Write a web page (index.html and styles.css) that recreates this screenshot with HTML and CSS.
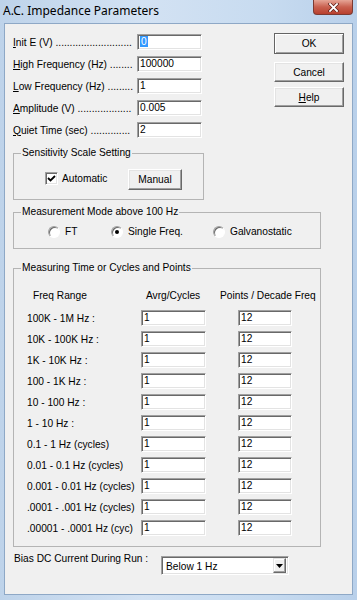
FILE: index.html
```html
<!DOCTYPE html>
<html lang="en">
<head>
    <meta charset="UTF-8">
    <meta name="viewport" content="width=device-width, initial-scale=1.0">
    <title>A.C. Impedance Parameters</title>
    <link rel="stylesheet" href="styles.css">
</head>
<body>
    <div class="window">
        <div class="titlebar">
            <span class="title">A.C. Impedance Parameters</span>
            <span class="close">
                <svg width="11" height="9" viewBox="0 0 11 9">
                    <path d="M2 1 L9 8 M9 1 L2 8" stroke="#5a1a14" stroke-width="3.2" stroke-linecap="square"/>
                    <path d="M2 1 L9 8 M9 1 L2 8" stroke="#fff" stroke-width="1.8" stroke-linecap="square"/>
                </svg>
            </span>
        </div>

        <div class="client">
            <div class="top">
                <div class="fields">
                    <div class="field">
                        <span class="lbl"><u>I</u>nit E (V) ...........................</span>
                        <div class="box"><span class="sel">0</span></div>
                    </div>
                    <div class="field">
                        <span class="lbl"><u>H</u>igh Frequency (Hz) ........</span>
                        <div class="box">100000</div>
                    </div>
                    <div class="field">
                        <span class="lbl"><u>L</u>ow Frequency (Hz) .........</span>
                        <div class="box">1</div>
                    </div>
                    <div class="field">
                        <span class="lbl"><u>A</u>mplitude (V) ...................</span>
                        <div class="box">0.005</div>
                    </div>
                    <div class="field">
                        <span class="lbl"><u>Q</u>uiet Time (sec) ..............</span>
                        <div class="box">2</div>
                    </div>
                </div>

                <div class="buttons">
                    <div class="btn btn-ok">OK</div>
                    <div class="btn btn-cancel">Cancel</div>
                    <div class="btn"><span><u>H</u>elp</span></div>
                </div>
            </div>

            <fieldset class="group group-sens">
                <legend>Sensitivity Scale Setting</legend>
                <div class="sens-row">
                    <div class="check">
                        <span class="cb">
                            <svg width="9" height="9" viewBox="0 0 9 9">
                                <path d="M1 4 L3.5 6.5 L8 2" stroke="#000" stroke-width="1.8" fill="none"/>
                            </svg>
                        </span>
                        <span>Automatic</span>
                    </div>
                    <div class="btn btn-manual">Manual</div>
                </div>
            </fieldset>

            <fieldset class="group group-mode">
                <legend>Measurement Mode above 100 Hz</legend>
                <div class="radios">
                    <div class="radio-item item-ft"><span class="radio"></span><span>FT</span></div>
                    <div class="radio-item item-single"><span class="radio on"></span><span>Single Freq.</span></div>
                    <div class="radio-item"><span class="radio"></span><span>Galvanostatic</span></div>
                </div>
            </fieldset>

            <fieldset class="group group-time">
                <legend>Measuring Time or Cycles and Points</legend>
                <div class="colhead">
                    <span class="head-range">Freq Range</span>
                    <span class="head-avrg">Avrg/Cycles</span>
                    <span>Points / Decade Freq</span>
                </div>
                <div class="freq-grid" id="freqGrid"></div>
            </fieldset>

            <div class="bias">
                <span class="bias-lbl">Bias DC Current During Run :</span>
                <div class="combo">
                    <span>Below 1 Hz</span>
                    <span class="combo-btn">
                        <svg width="7" height="4" viewBox="0 0 7 4"><path d="M0 0 H7 L3.5 4 Z" fill="#000"/></svg>
                    </span>
                </div>
            </div>
        </div>
    </div>

    <script>
        const ranges = [
            '100K - 1M Hz :',
            '10K - 100K Hz :',
            '1K - 10K Hz :',
            '100 - 1K Hz :',
            '10 - 100 Hz :',
            '1 - 10 Hz :',
            '0.1 - 1 Hz (cycles)',
            '0.01 - 0.1 Hz (cycles)',
            '0.001 - 0.01 Hz (cycles)',
            '.0001 - .001 Hz (cycles)',
            '.00001 - .0001 Hz (cyc)'
        ];

        const grid = document.getElementById('freqGrid');
        ranges.forEach(range => {
            const label = document.createElement('span');
            label.className = 'range-lbl';
            label.textContent = range;
            grid.appendChild(label);

            const avrg = document.createElement('div');
            avrg.className = 'box';
            avrg.textContent = '1';
            grid.appendChild(avrg);

            const points = document.createElement('div');
            points.className = 'box box-pts';
            points.textContent = '12';
            grid.appendChild(points);
        });
    </script>
</body>
</html>
```

FILE: styles.css
```css
* {
    box-sizing: border-box;
}
body {
    margin: 0;
    font-family: "Liberation Sans", Arial, sans-serif;
    font-size: 10.2px;
    color: #000;
}
.window {
    width: 357px;
    height: 600px;
    display: flex;
    flex-direction: column;
    padding: 0 4px 5px 4px;
    background: linear-gradient(90deg, #bed3ea, #d3e2f3 40%, #c7dbf0 75%, #b9d0ea);
}
.titlebar {
    height: 23px;
    display: flex;
    align-items: flex-start;
}
.title {
    font-family: "Noto Sans", sans-serif;
    font-size: 12px;
    line-height: 16px;
    margin: 3px 0 0 -1px;
}
.close {
    margin-left: auto;
    width: 40px;
    height: 15px;
    display: flex;
    align-items: center;
    justify-content: center;
    border: 1px solid #7c3a32;
    border-top: none;
    border-radius: 0 0 4px 4px;
    background: linear-gradient(#e6a596, #c9604f 50%, #b8402e);
}
.client {
    flex: 1;
    background: #f0f0f0;
    border: 1px solid #8ea8c6;
}

/* top fields + buttons */
.top {
    display: flex;
    padding: 9px 0 0 8px;
}
.fields {
    margin-top: 1px;
}
.field {
    display: flex;
    align-items: center;
    height: 16px;
    margin-bottom: 6px;
}
.field:last-child {
    margin-bottom: 0;
}
.lbl {
    width: 121px;
    margin-right: 3px;
    white-space: nowrap;
    overflow: hidden;
}
.box {
    width: 65px;
    height: 16px;
    background: #fff;
    border: 1px solid;
    border-color: #a0a0a0 #fff #fff #a0a0a0;
    box-shadow: inset 1px 1px #696969, inset -1px -1px #e3e3e3;
    padding-left: 2px;
    line-height: 14px;
    white-space: nowrap;
}
.box-pts {
    width: 54px;
}
.sel {
    background: #3399ff;
    color: #fff;
    padding: 0 1px;
}
.buttons {
    margin-left: 72px;
    display: flex;
    flex-direction: column;
}
.btn {
    width: 70px;
    height: 20px;
    display: flex;
    align-items: center;
    justify-content: center;
    background: #f0f0f0;
    border: 1px solid;
    border-color: #fff #696969 #696969 #fff;
    box-shadow: inset -1px -1px #a0a0a0, inset 1px 1px #e3e3e3;
}
.btn-ok {
    height: 21px;
    border-color: #646464;
    box-shadow: inset 1px 1px #fff, inset -1px -1px #a0a0a0;
    margin-bottom: 8px;
}
.btn-cancel {
    margin-bottom: 5px;
}

/* group boxes */
.group {
    margin: 0 0 0 8px;
    padding: 0;
    min-width: 0;
    border: 1px solid #b4b4b4;
}
.group legend {
    margin-left: 7px;
    padding: 0 1px;
    line-height: 12px;
}
.group-sens {
    width: 191px;
    margin-top: 9px;
}
.sens-row {
    display: flex;
    align-items: center;
    padding: 10px 0 9px 31px;
}
.check {
    width: 83px;
    display: flex;
    align-items: center;
    margin-top: -3px;
}
.cb {
    width: 13px;
    height: 13px;
    margin-right: 4px;
    display: flex;
    align-items: center;
    justify-content: center;
    background: #fff;
    border: 1px solid;
    border-color: #a0a0a0 #fff #fff #a0a0a0;
    box-shadow: inset 1px 1px #696969, inset -1px -1px #e3e3e3;
}
.btn-manual {
    width: 54px;
    height: 21px;
}
.group-mode {
    width: 308px;
    margin-top: 6px;
}
.radios {
    display: flex;
    align-items: center;
    padding: 7px 0 10px 34px;
    line-height: 13px;
}
.radio-item {
    display: flex;
    align-items: center;
    gap: 5px;
}
.item-ft {
    width: 63px;
}
.item-single {
    width: 102px;
}
.radio {
    position: relative;
    width: 12px;
    height: 12px;
    border-radius: 50%;
    background: #fff;
    border: 1px solid;
    border-color: #a0a0a0 #fff #fff #a0a0a0;
    box-shadow: inset 1px 1px #696969;
}
.radio.on::after {
    content: "";
    position: absolute;
    left: 3px;
    top: 3px;
    width: 4px;
    height: 4px;
    border-radius: 50%;
    background: #000;
}
.group-time {
    width: 308px;
    margin-top: 13px;
}
.colhead {
    display: flex;
    padding: 15px 0 0 19px;
    line-height: 13px;
    white-space: nowrap;
}
.head-range {
    width: 113px;
}
.head-avrg {
    width: 74px;
}
.freq-grid {
    display: grid;
    grid-template-columns: 114px 97px 54px;
    row-gap: 5px;
    padding: 8px 0 10px 13px;
}
.range-lbl {
    display: flex;
    align-items: center;
    white-space: nowrap;
}

/* bias row */
.bias {
    display: flex;
    align-items: flex-start;
    padding: 5px 0 0 9px;
    line-height: 13px;
}
.bias-lbl {
    width: 147px;
}
.combo {
    width: 128px;
    height: 19px;
    margin-top: 4px;
    display: flex;
    align-items: center;
    padding: 2px 2px 0 4px;
    background: #fff;
    border: 1px solid;
    border-color: #a0a0a0 #fff #fff #a0a0a0;
    box-shadow: inset 1px 1px #696969, inset -1px -1px #e3e3e3;
}
.combo-btn {
    margin-left: auto;
    margin-top: -2px;
    width: 13px;
    height: 15px;
    display: flex;
    align-items: center;
    justify-content: center;
    background: #f0f0f0;
    border: 1px solid;
    border-color: #e3e3e3 #696969 #696969 #e3e3e3;
    box-shadow: inset -1px -1px #a0a0a0, inset 1px 1px #fff;
}
```
